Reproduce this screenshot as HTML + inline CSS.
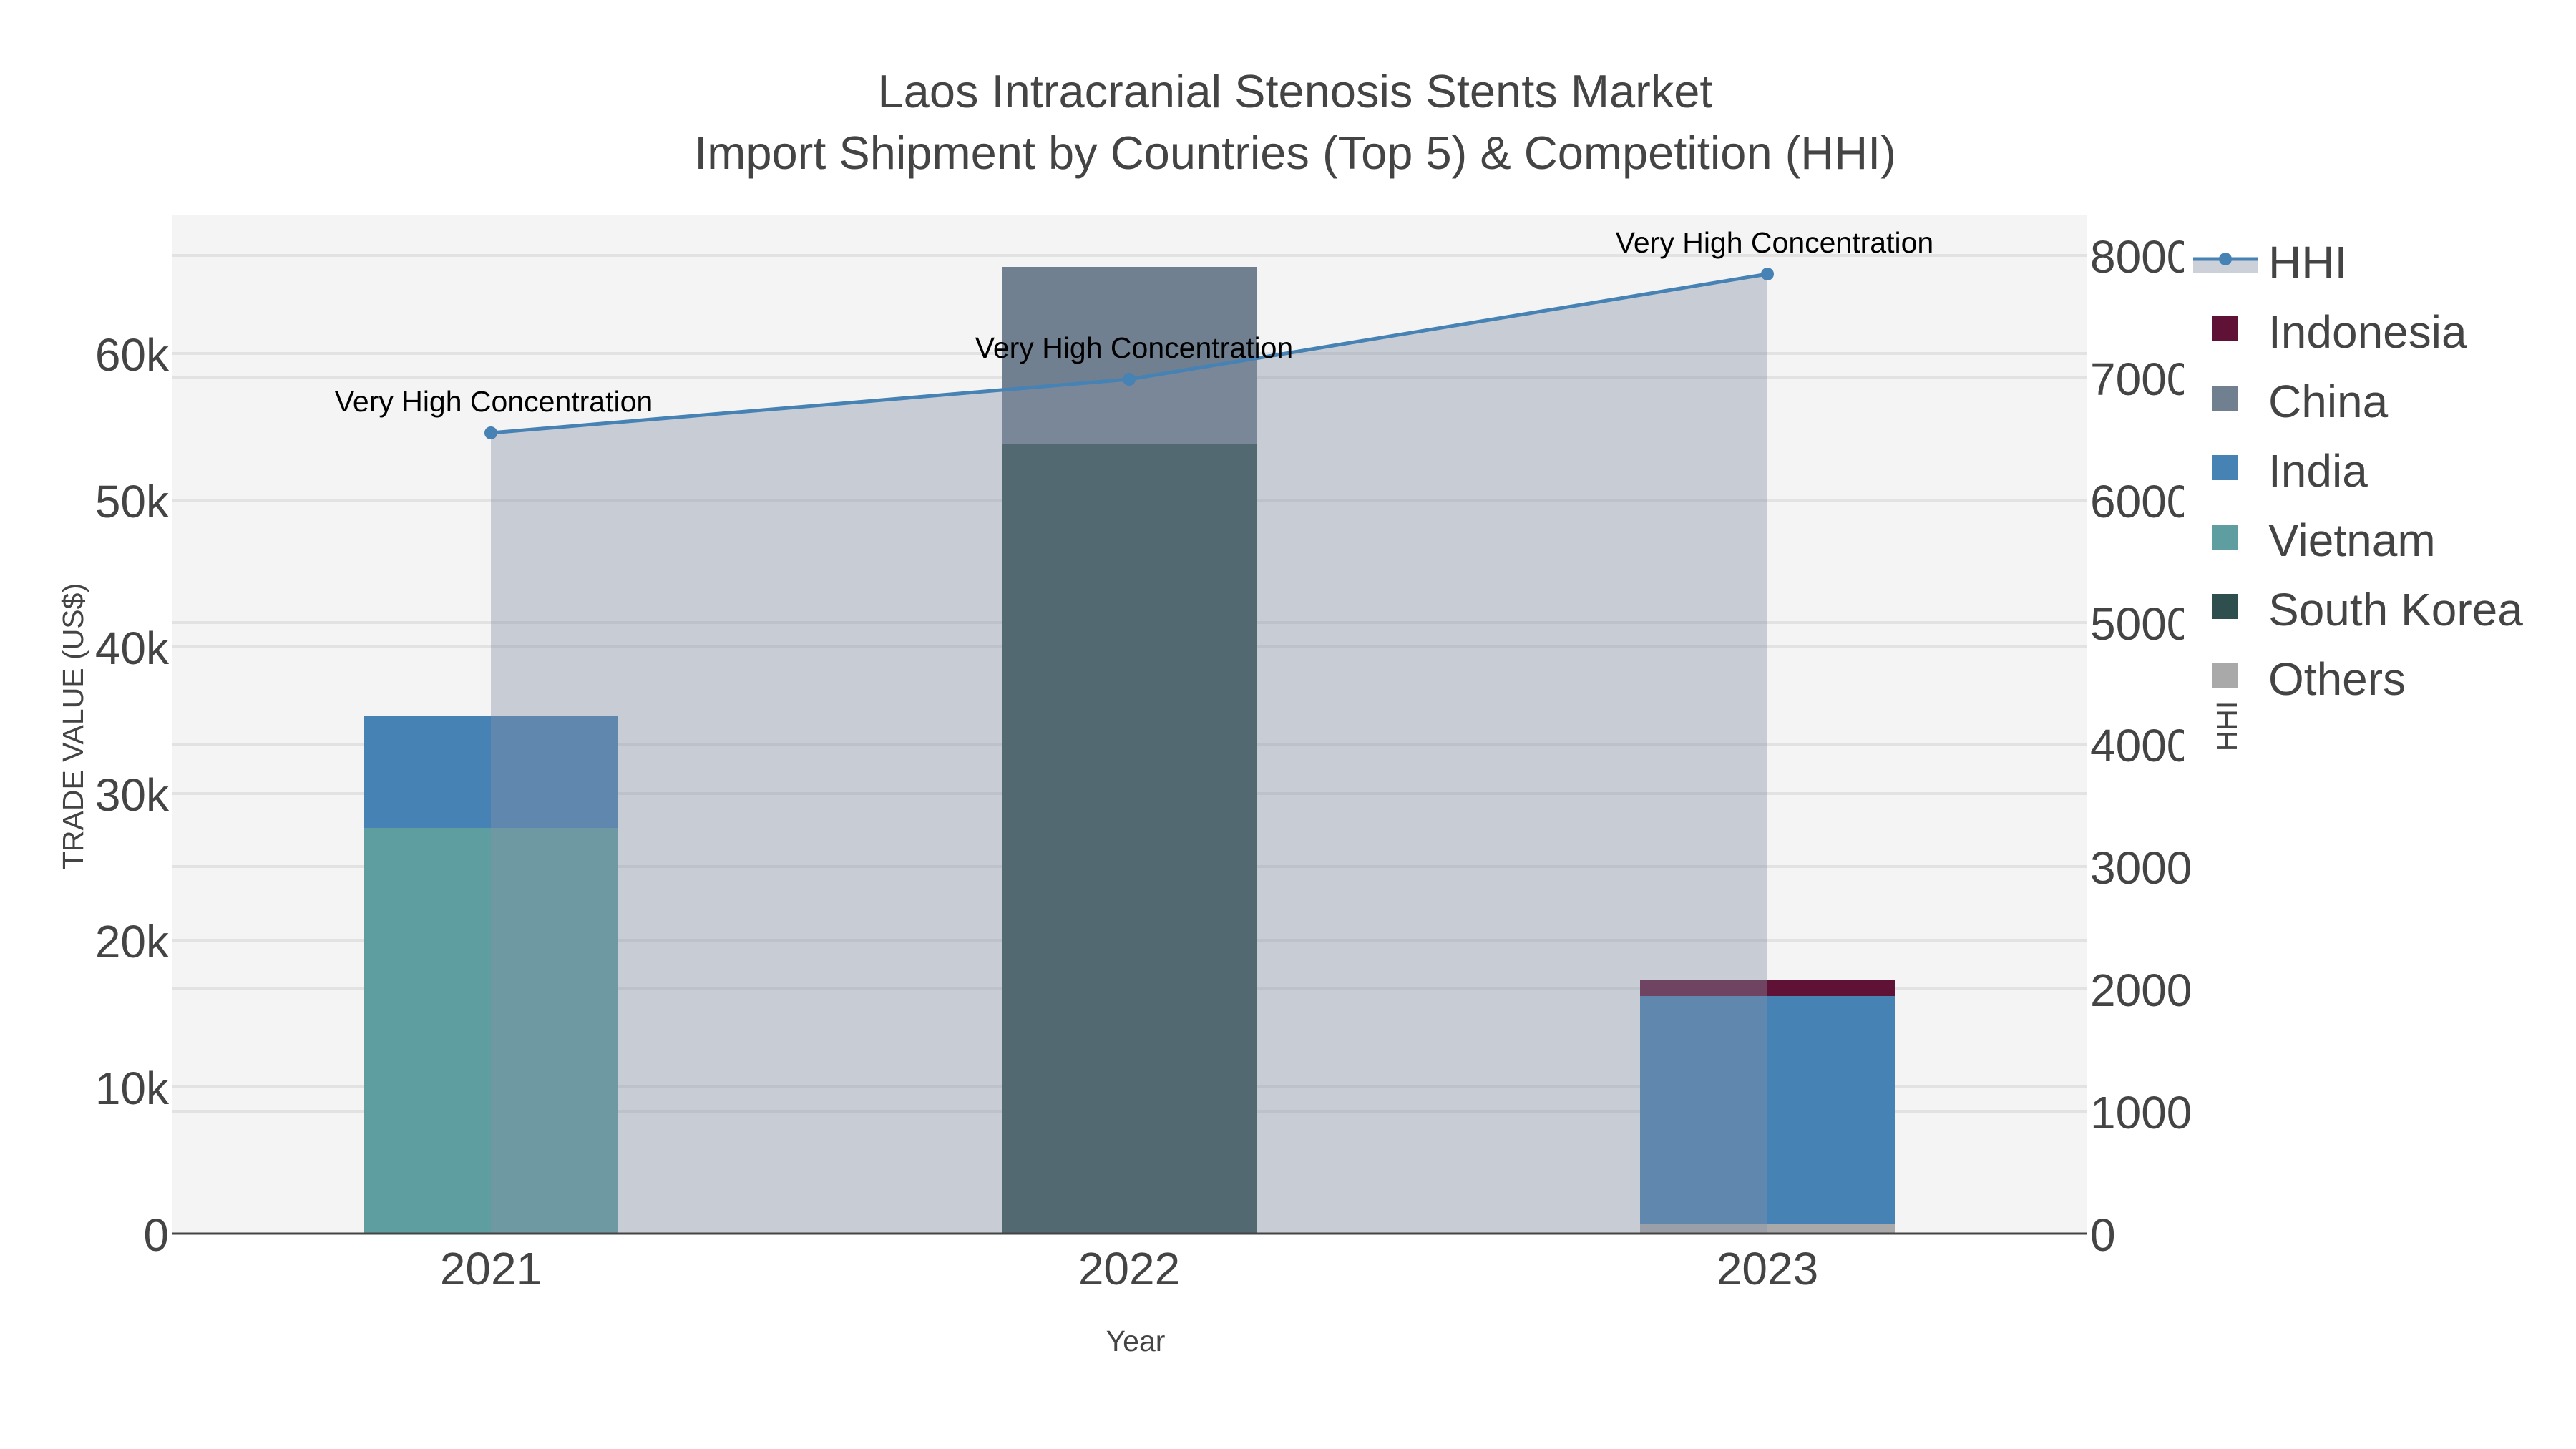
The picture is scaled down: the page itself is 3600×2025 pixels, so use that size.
<!DOCTYPE html>
<html><head><meta charset="utf-8"><style>html,body{margin:0;padding:0;background:#fff}svg{display:block}</style></head>
<body>
<svg width="3600" height="2025" viewBox="0 0 3600 2025" xmlns="http://www.w3.org/2000/svg" font-family="Liberation Sans, sans-serif">
<defs>
<clipPath id="rc"><rect x="2900" y="300" width="152" height="780"/><rect x="2900" y="1080" width="300" height="800"/></clipPath>
</defs>
<rect x="0" y="0" width="3600" height="2025" fill="#fff"/>
<text x="1810" y="150" font-size="65" fill="#444" text-anchor="middle">Laos Intracranial Stenosis Stents Market</text>
<text x="1810" y="236" font-size="65" fill="#444" text-anchor="middle">Import Shipment by Countries (Top 5) &amp; Competition (HHI)</text>
<rect x="240" y="300" width="2676" height="1424" fill="#f4f4f4"/>
<g stroke="#e2e2e2" stroke-width="4">
<line x1="240" x2="2916" y1="1519" y2="1519"/><line x1="240" x2="2916" y1="1314" y2="1314"/><line x1="240" x2="2916" y1="1109" y2="1109"/><line x1="240" x2="2916" y1="904" y2="904"/><line x1="240" x2="2916" y1="699" y2="699"/><line x1="240" x2="2916" y1="494" y2="494"/>
<line x1="240" x2="2916" y1="1553" y2="1553"/><line x1="240" x2="2916" y1="1382" y2="1382"/><line x1="240" x2="2916" y1="1211" y2="1211"/><line x1="240" x2="2916" y1="1040" y2="1040"/><line x1="240" x2="2916" y1="870" y2="870"/><line x1="240" x2="2916" y1="699" y2="699"/><line x1="240" x2="2916" y1="528" y2="528"/><line x1="240" x2="2916" y1="357" y2="357"/>
</g>
<rect x="508" y="1157" width="356" height="567" fill="#5f9ea0"/>
<rect x="508" y="1000" width="356" height="157" fill="#4682b4"/>
<rect x="1400" y="620" width="356" height="1104" fill="#2f4f4f"/>
<rect x="1400" y="373" width="356" height="247" fill="#708090"/>
<rect x="2292" y="1710" width="356" height="14" fill="#a9a9a9"/>
<rect x="2292" y="1392" width="356" height="318" fill="#4682b4"/>
<rect x="2292" y="1370" width="356" height="22" fill="#5f1236"/>
<polygon points="686,605 1578,530 2470,383 2470,1724 686,1724" fill="rgba(134,144,164,0.4)"/>
<polyline points="686,605 1578,530 2470,383" fill="none" stroke="#4682b4" stroke-width="5"/>
<circle cx="686" cy="605" r="9" fill="#4682b4"/><circle cx="1578" cy="530" r="9" fill="#4682b4"/><circle cx="2470" cy="383" r="9" fill="#4682b4"/>
<line x1="240" x2="2916" y1="1724" y2="1724" stroke="#444" stroke-width="3"/>
<g font-size="41" fill="#000" text-anchor="middle">
<text x="690" y="575">Very High Concentration</text>
<text x="1585" y="500">Very High Concentration</text>
<text x="2480" y="353">Very High Concentration</text>
</g>
<g font-size="64" fill="#444" text-anchor="end">
<text x="236" y="1748">0</text><text x="236" y="1543">10k</text><text x="236" y="1338">20k</text><text x="236" y="1133">30k</text><text x="236" y="928">40k</text><text x="236" y="723">50k</text><text x="236" y="518">60k</text>
</g>
<g font-size="64" fill="#444" clip-path="url(#rc)">
<text x="2921" y="1748">0</text><text x="2921" y="1577">1000</text><text x="2921" y="1406">2000</text><text x="2921" y="1235">3000</text><text x="2921" y="1064">4000</text><text x="2921" y="894">5000</text><text x="2921" y="723">6000</text><text x="2921" y="552">7000</text><text x="2921" y="381">8000</text>
</g>
<g font-size="64" fill="#444" text-anchor="middle">
<text x="686" y="1795">2021</text><text x="1578" y="1795">2022</text><text x="2470" y="1795">2023</text>
</g>
<text x="1587" y="1888" font-size="41" fill="#444" text-anchor="middle">Year</text>
<text transform="translate(116,1015) rotate(-90)" font-size="41" fill="#444" text-anchor="middle">TRADE VALUE (US$)</text>
<text transform="translate(3126,1015) rotate(-90)" font-size="41" fill="#444" text-anchor="middle">HHI</text>
<rect x="3065" y="362" width="90" height="19" fill="#ccd0d8"/>
<line x1="3065" x2="3155" y1="362" y2="362" stroke="#4682b4" stroke-width="5"/>
<circle cx="3110" cy="362" r="9" fill="#4682b4"/>
<rect x="3091" y="442" width="37" height="35" fill="#5f1236"/>
<rect x="3091" y="539" width="37" height="35" fill="#708090"/>
<rect x="3091" y="636" width="37" height="35" fill="#4682b4"/>
<rect x="3091" y="733" width="37" height="35" fill="#5f9ea0"/>
<rect x="3091" y="830" width="37" height="35" fill="#2f4f4f"/>
<rect x="3091" y="927" width="37" height="35" fill="#a9a9a9"/>
<g font-size="64" fill="#444">
<text x="3170" y="389">HHI</text><text x="3170" y="486">Indonesia</text><text x="3170" y="583">China</text><text x="3170" y="680">India</text><text x="3170" y="777">Vietnam</text><text x="3170" y="874">South Korea</text><text x="3170" y="971">Others</text>
</g>
</svg>
</body></html>
